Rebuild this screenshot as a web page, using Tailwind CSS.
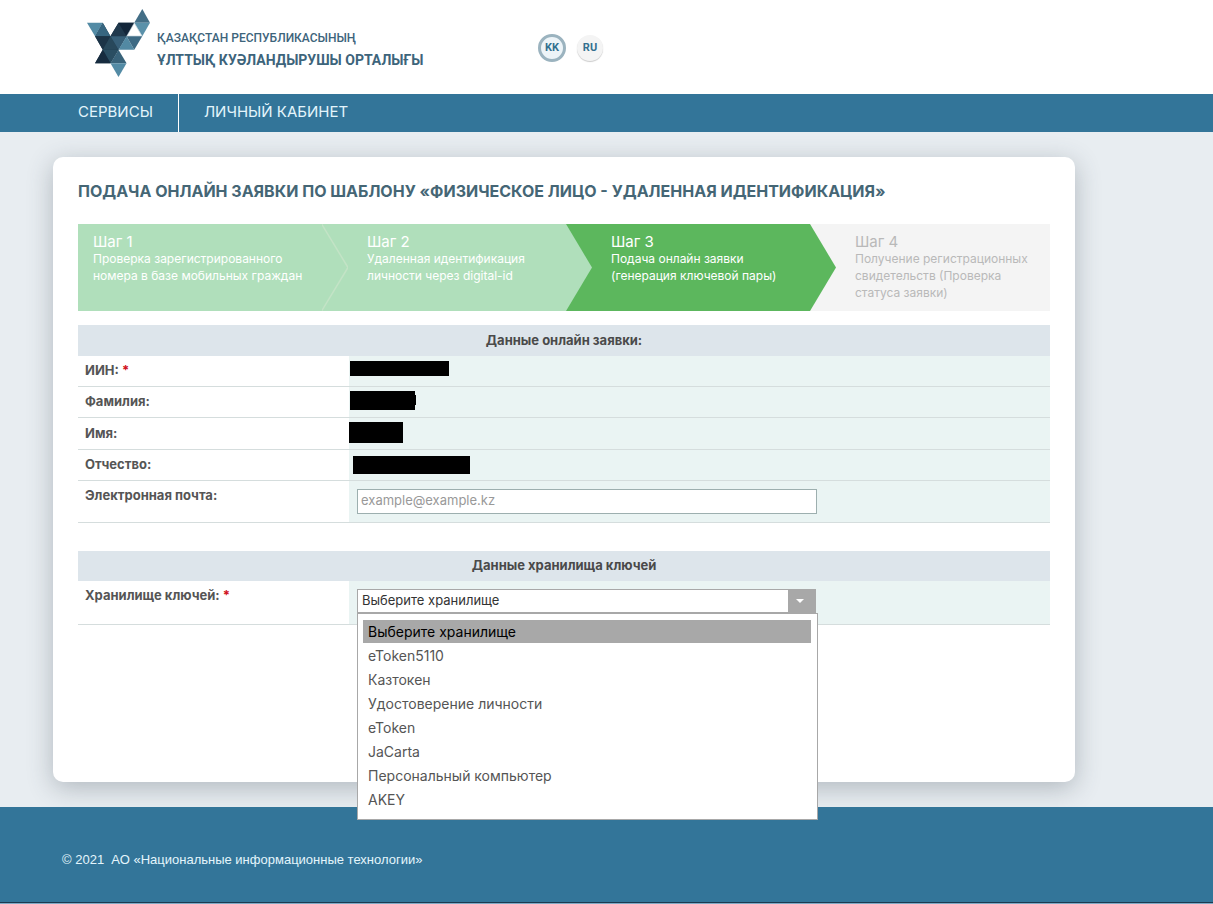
<!DOCTYPE html>
<html lang="ru">
<head>
<meta charset="utf-8">
<meta name="viewport" content="width=device-width, initial-scale=1">
<title>Подача онлайн заявки</title>
<script src="https://cdn.jsdelivr.net/npm/@tailwindcss/browser@4"></script>
</head>
<body class="flex min-h-screen flex-col bg-[#e8edf1] font-['Inter',sans-serif] text-[13px] text-[#4a4a4a]">

<header class="flex h-[94px] items-start bg-white pl-[87px]">
  <a href="#" class="flex w-[451px] pt-2 font-['Roboto',sans-serif] text-[#3d647b]">
    <svg class="mt-px h-[68px] w-[63px] shrink-0" viewBox="22 15 188 204" preserveAspectRatio="none" aria-hidden="true">
      <path fill="#1c3447" d="M46 97L69 56l23 41 24-41h47l-23 41-24 40-24 41H46l23-41z"/>
      <path fill="#538ba5" d="M22 56h47l-23 41z"/>
      <path fill="#376680" d="M69 56l23 41H46z"/>
      <path fill="#1c3447" d="M46 97h46l-23 40z"/>
      <path fill="#28485b" d="M92 97l24 40H69z"/>
      <path fill="#20394d" d="M116 56l24 41H92z"/>
      <path fill="#13263a" d="M116 56h47l-23 41z"/>
      <path fill="#436e86" d="M187 15l23 41h-47z"/>
      <path fill="#5a91aa" d="M163 56h47l-23 41z"/>
      <path fill="none" stroke="#c4d5de" stroke-width="2" d="M163 57l23 39h-45z"/>
      <path fill="#375f78" d="M92 97h48l-24 40z"/>
      <path fill="#5289a3" d="M140 97l23 40h-47z"/>
      <path fill="#3d6a84" d="M140 97h47l-24 40z"/>
      <path fill="#2a4e62" d="M69 137h47l-24 41z"/>
      <path fill="#172c3f" d="M69 137l23 41H46z"/>
      <path fill="#39637a" d="M116 137l24 41H92z"/>
      <path fill="#538ba5" d="M92 178h48l-24 41z"/>
    </svg>
    <span class="flex flex-col pt-[19px] pl-[7px] whitespace-nowrap">
      <span class="text-[12px] leading-[22px] font-medium">ҚАЗАҚСТАН РЕСПУБЛИКАСЫНЫҢ</span>
      <span class="text-[14px] leading-[22px] font-bold">ҰЛТТЫҚ КУӘЛАНДЫРУШЫ ОРТАЛЫҒЫ</span>
    </span>
  </a>
  <div class="flex items-center gap-[11px] pt-[34px] font-['Roboto',sans-serif] text-[11px] font-bold text-[#33708f]">
    <button class="size-7 rounded-full border-[3px] border-[#9bb3bf] bg-[#edf4f8]">KK</button>
    <button class="size-[26px] rounded-full bg-[#f4f4f4] shadow-[0_1px_1px_#ccc]">RU</button>
  </div>
</header>

<nav class="flex h-[38px] bg-[#337599] text-[15px] leading-[22px] text-[#e4f5fc]">
  <a href="#" class="border-r border-white pt-[7px] pr-[25px] pl-[78px]">СЕРВИСЫ</a>
  <a href="#" class="px-[25px] pt-[7px]">ЛИЧНЫЙ КАБИНЕТ</a>
</nav>

<main class="flex flex-1 flex-col py-[25px] pr-8 pl-[53px]">
  <section class="w-full max-w-[1022px] flex-1 rounded-[10px] bg-white px-[25px] pt-[22px] shadow-[0_6px_26px_rgba(60,70,85,0.32)]">
    <h1 class="text-[16px] leading-6 font-bold whitespace-nowrap text-[#456675]">ПОДАЧА ОНЛАЙН ЗАЯВКИ ПО ШАБЛОНУ «ФИЗИЧЕСКОЕ ЛИЦО - УДАЛЕННАЯ ИДЕНТИФИКАЦИЯ»</h1>

    <ol class="mt-[21px] grid h-[87px] grid-cols-[244fr_244fr_244fr_240fr] text-[12px] leading-[17px] text-white">
      <li class="relative z-30 bg-[#b0dfbb] pt-[9px] pl-[15px] whitespace-nowrap">
        <svg class="absolute top-0 left-full h-full w-[26px]" viewBox="0 0 26 87" aria-hidden="true"><path fill="#b0dfbb" stroke="#c3e3c6" stroke-width="1.5" d="M-1-1L26 43.500L-1 88"/></svg>
        <h2 class="text-[15px]">Шаг 1</h2>
        <p>Проверка зарегистрированного<br>номера в базе мобильных граждан</p>
      </li>
      <li class="relative z-20 bg-[#b0dfbb] pt-[9px] pl-[45px] whitespace-nowrap">
        <svg class="absolute top-0 left-full h-full w-[26px]" viewBox="0 0 26 87" aria-hidden="true"><path fill="#b0dfbb" d="M-1 0H0L26 43.500L0 87H-1z"/></svg>
        <h2 class="text-[15px]">Шаг 2</h2>
        <p>Удаленная идентификация<br>личности через digital-id</p>
      </li>
      <li class="relative z-10 bg-[#5cb75d] pt-[9px] pl-[45px] whitespace-nowrap">
        <svg class="absolute top-0 left-full h-full w-[26px]" viewBox="0 0 26 87" aria-hidden="true"><path fill="#5cb75d" d="M-1 0H0L26 43.500L0 87H-1z"/></svg>
        <h2 class="text-[15px]">Шаг 3</h2>
        <p>Подача онлайн заявки<br>(генерация ключевой пары)</p>
      </li>
      <li class="bg-[#f4f4f4] pt-[9px] pl-[45px] whitespace-nowrap text-[#b9b9b9]">
        <h2 class="text-[15px]">Шаг 4</h2>
        <p>Получение регистрационных<br>свидетельств (Проверка<br>статуса заявки)</p>
      </li>
    </ol>

    <table class="mt-[14px] w-full table-fixed border-collapse text-[13px] leading-[17px]">
      <colgroup><col class="w-[271px]"><col></colgroup>
      <thead><tr class="h-[31px] bg-[#dde5eb]"><th colspan="2" class="pb-px font-bold">Данные онлайн заявки:</th></tr></thead>
      <tbody class="align-top">
        <tr class="h-[30px] border-b border-[#d5dddd]"><th class="pt-1.5 pl-[7px] text-left text-[#555]">ИИН: <span class="text-[#d01020]">*</span></th><td class="bg-[#eaf4f3] pt-[5px] pl-px"><div class="h-[15px] w-[99px] bg-black"></div></td></tr>
        <tr class="h-[31px] border-b border-[#d5dddd]"><th class="pt-1.5 pl-[7px] text-left text-[#555]">Фамилия:</th><td class="bg-[#eaf4f3] pt-1 pl-px"><div class="flex h-[19px] items-center"><div class="h-full w-[65px] bg-black"></div><div class="h-[10px] w-px bg-black"></div></div></td></tr>
        <tr class="h-8 border-b border-[#d5dddd]"><th class="pt-[7px] pl-[7px] text-left text-[#555]">Имя:</th><td class="bg-[#eaf4f3] pt-1"><div class="h-[21px] w-[54px] bg-black"></div></td></tr>
        <tr class="h-[31px] border-b border-[#d5dddd]"><th class="pt-1.5 pl-[7px] text-left text-[#555]">Отчество:</th><td class="bg-[#eaf4f3] pt-1.5 pl-1"><div class="h-[18px] w-[117px] bg-black"></div></td></tr>
        <tr class="h-[42px] border-b border-[#d5dddd]"><th class="pt-1.5 pl-[7px] text-left text-[#555]"><label for="email">Электронная почта:</label></th><td class="bg-[#eaf4f3] pt-2 pl-2"><input id="email" type="email" placeholder="example@example.kz" class="block h-[25px] w-[460px] border border-[#9dafaf] bg-white px-[3px] pb-0.5 text-[13px] placeholder:text-[#999]"></td></tr>
      </tbody>
    </table>

    <table class="mt-7 w-full table-fixed border-collapse text-[13px] leading-[17px]">
      <colgroup><col class="w-[271px]"><col></colgroup>
      <thead><tr class="h-[30px] bg-[#dde5eb]"><th colspan="2" class="font-bold">Данные хранилища ключей</th></tr></thead>
      <tbody class="align-top">
        <tr class="h-11 border-b border-[#d5dddd]">
          <th class="pt-1.5 pl-[7px] text-left text-[#555]"><label for="storage">Хранилище ключей: <span class="text-[#d01020]">*</span></label></th>
          <td class="bg-[#eaf4f3] pt-2 pl-2">
            <div class="relative w-[459px]">
              <select id="storage" class="block h-6 w-full appearance-none border border-[#a8a8a8] bg-white px-1 text-[13px] text-[#333]"><option>Выберите хранилище</option><option>eToken5110</option><option>Казтокен</option><option>Удостоверение личности</option><option>eToken</option><option>JaCarta</option><option>Персональный компьютер</option><option>AKEY</option></select>
              <span class="pointer-events-none absolute inset-y-0 right-0 flex w-7 items-center justify-center bg-[#a8a8a8]"><svg class="mr-1 h-1 w-2" viewBox="0 0 8 4" aria-hidden="true"><path fill="#fff" d="M0 0h8L4 4z"/></svg></span>
              <ul role="listbox" aria-label="Хранилище ключей" class="absolute top-full left-0 z-40 flex h-[207px] w-[461px] flex-col gap-px border border-[#a8a8a8] bg-white pt-1.5 pr-1.5 pl-[5px] text-[14px] text-[#555]">
                <li role="option" aria-selected="true" class="h-[23px] bg-[#a8a8a8] pl-[5px] leading-[23px] text-black">Выберите хранилище</li>
                <li role="option" class="h-[23px] pl-[5px] leading-[23px]">eToken5110</li>
                <li role="option" class="h-[23px] pl-[5px] leading-[23px]">Казтокен</li>
                <li role="option" class="h-[23px] pl-[5px] leading-[23px]">Удостоверение личности</li>
                <li role="option" class="h-[23px] pl-[5px] leading-[23px]">eToken</li>
                <li role="option" class="h-[23px] pl-[5px] leading-[23px]">JaCarta</li>
                <li role="option" class="h-[23px] pl-[5px] leading-[23px]">Персональный компьютер</li>
                <li role="option" class="h-[23px] pl-[5px] leading-[23px]">AKEY</li>
              </ul>
            </div>
          </td>
        </tr>
      </tbody>
    </table>
  </section>
</main>

<footer class="relative h-[97px] border-b border-[#7fa9c4] bg-[#337599] pt-[43px] pl-[62px] font-['Liberation_Sans',sans-serif] text-[13px] text-[#e4f5fc]">
  <p>© 2021 &nbsp;АО «Национальные информационные технологии»</p>
  <div class="absolute inset-x-0 bottom-0 h-px bg-[#1b3a50]"></div>
</footer>
</body>
</html>
